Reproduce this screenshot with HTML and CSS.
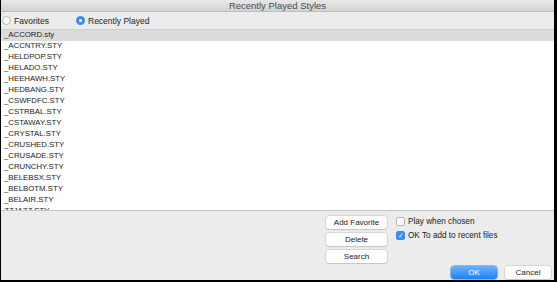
FILE: index.html
```html
<!DOCTYPE html>
<html lang="en">

<head>
    <meta charset="UTF-8">
    <title>Recently Played Styles</title>
    <link rel="stylesheet" href="styles.css">
</head>

<body>
    <div class="window">
        <div class="titlebar">Recently Played Styles</div>
        <div class="radios">
            <label class="radio"><span class="dot"></span>Favorites</label>
            <label class="radio on"><span class="dot"></span>Recently Played</label>
        </div>
        <ul class="list">
            <li class="sel">_ACCORD.sty</li>
            <li>_ACCNTRY.STY</li>
            <li>_HELDPOP.STY</li>
            <li>_HELADO.STY</li>
            <li>_HEEHAWH.STY</li>
            <li>_HEDBANG.STY</li>
            <li>_CSWFDFC.STY</li>
            <li>_CSTRBAL.STY</li>
            <li>_CSTAWAY.STY</li>
            <li>_CRYSTAL.STY</li>
            <li>_CRUSHED.STY</li>
            <li>_CRUSADE.STY</li>
            <li>_CRUNCHY.STY</li>
            <li>_BELEBSX.STY</li>
            <li>_BELBOTM.STY</li>
            <li>_BELAIR.STY</li>
            <li>ZZJAZZ.STY</li>
        </ul>
        <div class="bottom">
            <div class="btns">
                <button class="btn">Add Favorite</button>
                <button class="btn">Delete</button>
                <button class="btn">Search</button>
            </div>
            <div class="checks">
                <label class="check"><span class="box"></span>Play when chosen</label>
                <label class="check"><span class="box on">&#10003;</span>OK To add to recent files</label>
            </div>
        </div>
        <div class="actions">
            <button class="btn ok">OK</button>
            <button class="btn">Cancel</button>
        </div>
    </div>
</body>

</html>
```

FILE: styles.css
```css
body {
    margin: 0;
    font-family: 'Liberation Sans', Arial, sans-serif;
    color: #222;
}

.window {
    width: 557px;
    height: 282px;
    box-sizing: border-box;
    background-color: #ececec;
    border-left: 1px solid #000;
    border-right: 3px solid #000;
    border-bottom: 2px solid #000;
    display: flex;
    flex-direction: column;
}

.titlebar {
    height: 11px;
    line-height: 11px;
    font-size: 9.5px;
    text-align: center;
    color: #4a4a4a;
    background: linear-gradient(#e8e8e8, #d3d3d3);
    border-bottom: 1px solid #bdbdbd;
}

.radios {
    height: 17px;
    display: flex;
    align-items: center;
    padding-left: 1px;
    font-size: 8.5px;
}

.radio {
    display: flex;
    align-items: center;
    gap: 3px;
    width: 74px;
    white-space: nowrap;
}

.dot {
    width: 9px;
    height: 9px;
    box-sizing: border-box;
    border-radius: 50%;
    border: 1px solid #b5b5b5;
    background-color: #fff;
}

.radio.on .dot {
    border: 3px solid #3b8ef0;
    background-color: #fff;
}

.list {
    list-style: none;
    margin: 0;
    padding: 0;
    height: 180px;
    overflow: hidden;
    background-color: #fff;
    border-top: 1px solid #d0d0d0;
    border-bottom: 1px solid #c4c4c4;
    font-size: 7.8px;
}

.list li {
    height: 11px;
    line-height: 10px;
    padding-left: 3px;
}

.list li.sel {
    background-color: #dcdcdc;
}

.bottom {
    display: flex;
    padding: 5px 0 0 325px;
    gap: 9px;
}

.btns {
    display: flex;
    flex-direction: column;
    gap: 4px;
}

.btn {
    width: 61px;
    height: 13px;
    padding: 0;
    font-family: inherit;
    font-size: 8px;
    color: #222;
    background-color: #fff;
    border: none;
    border-radius: 3px;
    box-shadow: 0 0 0 0.5px #c2c2c2, 0 1px 1px rgba(0, 0, 0, 0.15);
}

.checks {
    display: flex;
    flex-direction: column;
    gap: 5px;
    padding-top: 1px;
    font-size: 8.2px;
}

.check {
    display: flex;
    align-items: center;
    gap: 3px;
}

.box {
    width: 9px;
    height: 9px;
    box-sizing: border-box;
    border: 1px solid #b5b5b5;
    border-radius: 2px;
    background-color: #fff;
    font-size: 7px;
    line-height: 8px;
    text-align: center;
    color: #fff;
}

.box.on {
    background-color: #3b8ef0;
    border-color: #3b8ef0;
}

.actions {
    display: flex;
    justify-content: flex-end;
    gap: 8px;
    padding: 3px 3px 0 0;
}

.actions .btn {
    width: 46px;
}

.btn.ok {
    color: #fff;
    background: linear-gradient(#6cb3fa, #1a82fb);
    box-shadow: 0 0 0 0.5px #2c7fe8;
}
```
